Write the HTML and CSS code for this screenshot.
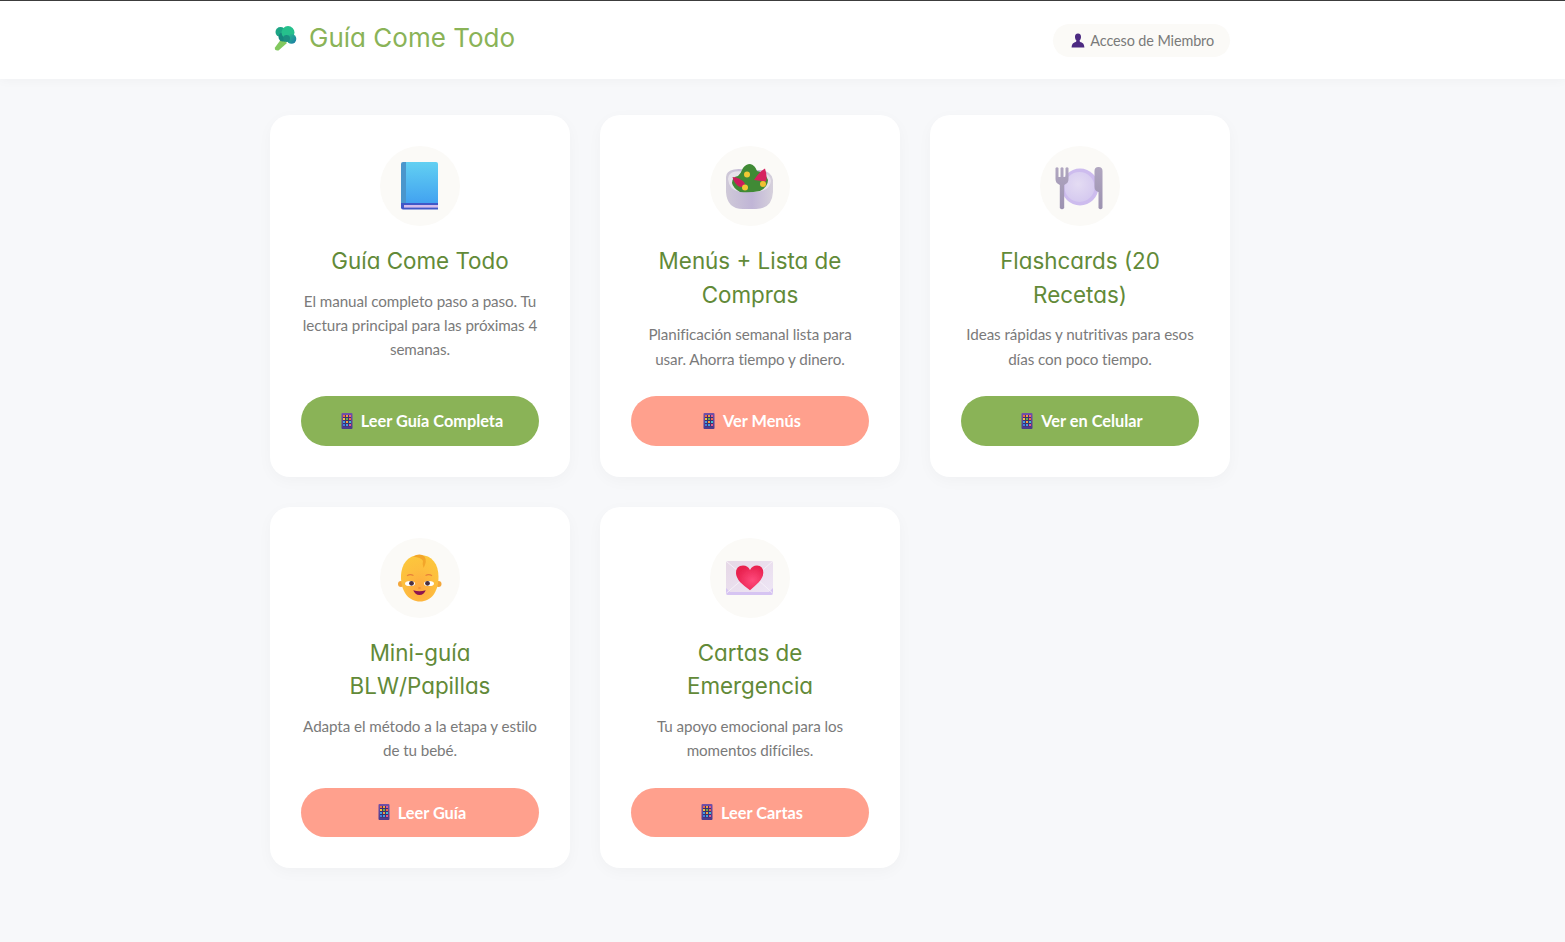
FILE: index.html
```html
<!DOCTYPE html>
<html lang="es">
<head>
<meta charset="utf-8">
<title>Guía Come Todo</title>
<link rel="stylesheet" href="styles.css">
</head>
<body>
<svg class="defs" width="0" height="0" aria-hidden="true">
  <defs>
    <linearGradient id="g-phone" x1="0" y1="0" x2="0" y2="1"><stop offset="0" stop-color="#7350a8"/><stop offset="1" stop-color="#4a3a8c"/></linearGradient>
    <symbol id="phone" viewBox="0 0 12 16">
      <rect x="0.5" y="0" width="11" height="16" rx="1" fill="url(#g-phone)"/>
      <rect x="2" y="2" width="8" height="11.500" fill="#3d2f70"/>
      <rect x="2" y="2" width="2" height="2" fill="#ef6a4a"/><rect x="5" y="2" width="2" height="2" fill="#f0a040"/><rect x="8" y="2" width="2" height="2" fill="#e85a8a"/>
      <rect x="2" y="5" width="2" height="2" fill="#f0c040"/><rect x="5" y="5" width="2" height="2" fill="#6ab04a"/><rect x="8" y="5" width="2" height="2" fill="#ef6a4a"/>
      <rect x="2" y="8" width="2" height="2" fill="#40a0e0"/><rect x="5" y="8" width="2" height="2" fill="#f0a040"/><rect x="8" y="8" width="2" height="2" fill="#40c0d0"/>
      <rect x="2" y="11" width="2" height="2" fill="#4080e0"/><rect x="5" y="11" width="2" height="2" fill="#40a0e0"/><rect x="8" y="11" width="2" height="2" fill="#e85a8a"/>
    </symbol>
    <filter id="soft" x="-10%" y="-10%" width="120%" height="120%"><feGaussianBlur stdDeviation="0.35"/></filter>
    <linearGradient id="g-book" x1="0" y1="0" x2="0" y2="1"><stop offset="0" stop-color="#62d0f2"/><stop offset="1" stop-color="#3f9ef0"/></linearGradient>
    <linearGradient id="g-bowl" x1="0" y1="0" x2="1" y2="0"><stop offset="0" stop-color="#cfc9d8"/><stop offset="0.55" stop-color="#c0b5d6"/><stop offset="1" stop-color="#d6d1dc"/></linearGradient>
    <radialGradient id="g-plate" cx="0.45" cy="0.4" r="0.65"><stop offset="0" stop-color="#e4dcf3"/><stop offset="1" stop-color="#d4c8ef"/></radialGradient>
    <linearGradient id="g-cut" x1="0" y1="0" x2="0" y2="1"><stop offset="0" stop-color="#b0a6c0"/><stop offset="1" stop-color="#9c92b0"/></linearGradient>
    <radialGradient id="g-face" cx="0.5" cy="0.72" r="0.7"><stop offset="0" stop-color="#ffa840"/><stop offset="0.6" stop-color="#fdbe3e"/><stop offset="1" stop-color="#fcc63c"/></radialGradient>
    <linearGradient id="g-env" x1="0" y1="0" x2="1" y2="1"><stop offset="0" stop-color="#e6d8e6"/><stop offset="1" stop-color="#eee6f6"/></linearGradient>
    <radialGradient id="g-heart" cx="0.6" cy="0.6" r="0.6"><stop offset="0" stop-color="#ff4a7c"/><stop offset="1" stop-color="#e8204e"/></radialGradient>
    <linearGradient id="g-broc" x1="0" y1="0" x2="1" y2="1"><stop offset="0" stop-color="#28c088"/><stop offset="1" stop-color="#1c78a8"/></linearGradient>
  </defs>
</svg>

<header class="site-header">
  <div class="header-inner">
    <div class="logo">
      <svg class="logo-icon" viewBox="0 0 24 26" aria-hidden="true">
        <path d="M1 21.500L8 12 13 17 4.500 24.500Q0 25 1 21.500Z" fill="#82c85e"/>
        <g filter="url(#soft)">
          <circle cx="6.500" cy="6" r="5" fill="#1fa585"/>
          <circle cx="9" cy="11" r="4.500" fill="#17867c"/>
          <circle cx="14" cy="6.500" r="6.500" fill="#25c08c"/>
          <circle cx="17.500" cy="13" r="4.800" fill="url(#g-broc)"/>
          <circle cx="12.500" cy="12.500" r="3.500" fill="#1a8e80"/>
        </g>
      </svg>
      <span class="logo-text">Guía Come Todo</span>
    </div>
    <a class="member-pill" href="#">
      <svg class="member-icon" viewBox="0 0 14 15" aria-hidden="true">
        <path d="M7 0.500C9.100 0.500 10.200 2.100 10 4.200 9.900 5.600 9.300 6.800 8.600 7.500 8.500 8.300 8.900 8.800 10 9.300 12 10.100 13.100 10.800 13.400 14.500H0.600C0.900 10.800 2 10.100 4 9.300 5.100 8.800 5.500 8.300 5.400 7.500 4.700 6.800 4.100 5.600 4 4.200 3.800 2.100 4.900 0.500 7 0.500Z" fill="#4c2a82"/>
      </svg>
      <span>Acceso de Miembro</span>
    </a>
  </div>
</header>

<main class="grid">
  <article class="card">
    <div class="card-icon">
      <svg viewBox="0 0 80 80" aria-hidden="true">
        <path d="M23 16H56Q58 16 58 18V61H23Z" fill="url(#g-book)"/>
        <path d="M23 16H26V59H21V18Q21 16 23 16Z" fill="#4a96cc"/>
        <path d="M21 57H58V63.500H23Q21 63.500 21 61.500Z" fill="#4058c8"/>
        <rect x="24" y="59" width="34" height="2.600" fill="#d4bcec"/>
      </svg>
    </div>
    <h2 class="card-title">Guía Come Todo</h2>
    <p class="card-text">El manual completo paso a paso. Tu lectura principal para las próximas 4 semanas.</p>
    <a class="btn btn-green" href="#"><svg class="btn-icon" aria-hidden="true"><use href="#phone"/></svg>Leer Guía Completa</a>
  </article>

  <article class="card">
    <div class="card-icon">
      <svg viewBox="0 0 80 80" aria-hidden="true">
        <path d="M16 31Q16 25 24 23.500 30 22.500 36 24H50Q62 25 63 34V46Q62 63 46 63H33Q17 63 16 46Z" fill="url(#g-bowl)"/>
        <path d="M18 33Q18 27 25 25.500 31 25 36 26H50Q60 27 61 35 60 45 46 46H30Q19 44 18 33Z" fill="#e6e2ea"/>
        <g filter="url(#soft)">
          <path d="M22 37Q22 31 28 30 31 27 33 22 36 18 40 18 45 19 47 25 56 27 58 34 58 41 50 45 40 47 30 46 23 42 22 37Z" fill="#3f8a36"/>
          <path d="M22.500 31Q30 31 35 37.500 33 43 28 40 23.500 36 22.500 31Z" fill="#cc1f5c"/>
          <path d="M55 22.500Q57.500 30 56 35.500L44 34Q49 26 55 22.500Z" fill="#d6225f"/>
          <circle cx="37" cy="28.500" r="3" fill="#f2c834"/>
          <circle cx="35" cy="41.500" r="3" fill="#f2c834"/>
          <circle cx="53" cy="38" r="3" fill="#f0c030"/>
        </g>
      </svg>
    </div>
    <h2 class="card-title">Menús + Lista de Compras</h2>
    <p class="card-text">Planificación semanal lista para usar. Ahorra tiempo y dinero.</p>
    <a class="btn btn-coral" href="#"><svg class="btn-icon" aria-hidden="true"><use href="#phone"/></svg>Ver Menús</a>
  </article>

  <article class="card">
    <div class="card-icon">
      <svg viewBox="0 0 80 80" aria-hidden="true">
        <circle cx="40" cy="41" r="18.500" fill="#cdbcee"/>
        <circle cx="39.500" cy="41" r="15" fill="url(#g-plate)"/>
        <path d="M15.500 22V33Q15.500 37 19 38.500L19.800 39V62Q22 64.500 24.200 62V39L25 38.500Q28.500 37 28.500 33V22Q27 20.500 25.500 22V31H23.500V22Q22 20.500 20.500 22V31H18.500V22Q17 20.500 15.500 22Z" fill="url(#g-cut)"/>
        <path d="M54.500 25Q54.500 21 58.500 21 62.500 21 62.500 25V62Q60.500 64.500 58.500 62V46Q54.500 45 54.500 41Z" fill="url(#g-cut)"/>
      </svg>
    </div>
    <h2 class="card-title">Flashcards (20 Recetas)</h2>
    <p class="card-text">Ideas rápidas y nutritivas para esos días con poco tiempo.</p>
    <a class="btn btn-green" href="#"><svg class="btn-icon" aria-hidden="true"><use href="#phone"/></svg>Ver en Celular</a>
  </article>

  <article class="card">
    <div class="card-icon">
      <svg viewBox="0 0 80 80" aria-hidden="true">
        <circle cx="21" cy="46" r="3" fill="#f3a63a"/>
        <circle cx="58.500" cy="46" r="3" fill="#f3a63a"/>
        <path d="M40 17C52 17 58.500 26 58.500 39 58.500 54 51 63.500 40 63.500 29 63.500 21 54 21 39 21 26 28 17 40 17Z" fill="url(#g-face)"/>
        <path d="M33 18.500Q40 14.500 44.500 18.500 47.500 23 43.500 30 42 26 43 23 42 19.500 33 18.500Z" fill="#f3a62a"/>
        <path d="M27 37.800Q30 35.800 33.500 37.500" stroke="#e8803a" stroke-width="1.200" fill="none"/>
        <path d="M45.500 37.500Q49 35.800 52 37.800" stroke="#e8803a" stroke-width="1.200" fill="none"/>
        <ellipse cx="30" cy="45.500" rx="5" ry="2.600" fill="#fff"/>
        <ellipse cx="49" cy="45.500" rx="5" ry="2.600" fill="#fff"/>
        <circle cx="31.500" cy="45.300" r="2.400" fill="#4a3040"/>
        <circle cx="47.500" cy="45.300" r="2.400" fill="#4a3040"/>
        <path d="M33.300 52.300Q39.500 54 45.700 52.300 44 57 39.500 57 35 57 33.300 52.300Z" fill="#8c1450"/>
        <ellipse cx="39.500" cy="50" rx="1.500" ry="0.800" fill="#f09030"/>
      </svg>
    </div>
    <h2 class="card-title">Mini-guía BLW/Papillas</h2>
    <p class="card-text">Adapta el método a la etapa y estilo de tu bebé.</p>
    <a class="btn btn-coral" href="#"><svg class="btn-icon" aria-hidden="true"><use href="#phone"/></svg>Leer Guía</a>
  </article>

  <article class="card">
    <div class="card-icon">
      <svg viewBox="0 0 80 80" aria-hidden="true">
        <rect x="16" y="23" width="47" height="34" rx="2" fill="url(#g-env)"/>
        <path d="M16 50L20 54H59L63 50V55Q63 57 61 57H18Q16 57 16 55Z" fill="#d6c4f2"/>
        <path d="M16.500 23.500L40 43 62.500 23.500" fill="none" stroke="#f6f0f8" stroke-width="1"/>
        <path d="M16.500 55L34 40M62.500 55L46 40" fill="none" stroke="#f6f0f8" stroke-width="1"/>
        <path d="M40 52.300Q34 48 30 44 26 39 26 35 26 27.500 33 27.500 38 27.500 40 32 42 27.500 47 27.500 53.300 27.500 53.300 35 53.300 39 49 44 45 48 40 52.300Z" fill="url(#g-heart)" filter="url(#soft)"/>
      </svg>
    </div>
    <h2 class="card-title">Cartas de Emergencia</h2>
    <p class="card-text">Tu apoyo emocional para los momentos difíciles.</p>
    <a class="btn btn-coral" href="#"><svg class="btn-icon" aria-hidden="true"><use href="#phone"/></svg>Leer Cartas</a>
  </article>
</main>
</body>
</html>
```

FILE: styles.css
```css
* { box-sizing: border-box; }

html, body { margin: 0; padding: 0; }

body {
  min-height: 942px;
  background: #f7f8fa;
  font-family: "Lato", "Liberation Sans", sans-serif;
  color: #7a7a7a;
}

.defs { display: block; height: 0; }

.site-header {
  height: 79px;
  background: #fff;
  border-top: 1px solid #3c3c3c;
  box-shadow: 0 2px 10px rgba(0, 0, 0, 0.03);
}

.header-inner {
  width: 960px;
  margin-left: 270px;
  display: flex;
  align-items: flex-start;
  justify-content: space-between;
}

.logo {
  display: flex;
  align-items: center;
  gap: 11px;
  padding: 22px 0 0 4px;
}

.logo-icon { width: 24px; height: 26px; margin-top: 2px; }

.logo-text {
  font-family: "Inter", sans-serif;
  font-feature-settings: "cv11" 1;
  font-size: 26px;
  line-height: 30px;
  color: #8ab357;
}

.member-pill {
  display: flex;
  align-items: center;
  gap: 5px;
  height: 33px;
  margin-top: 23px;
  padding: 0 16px 0 18px;
  border-radius: 17px;
  background: #fbfaf7;
  color: #7a7a7a;
  font-size: 14.4px;
  letter-spacing: -0.1px;
  text-decoration: none;
}

.member-icon { width: 14px; height: 15px; }

.grid {
  width: 960px;
  margin: 36px 0 0 270px;
  display: grid;
  grid-template-columns: repeat(3, 300px);
  gap: 30px;
}

.card {
  display: flex;
  flex-direction: column;
  align-items: center;
  padding: 31px;
  border-radius: 20px;
  background: #fff;
  box-shadow: 0 4px 15px rgba(0, 0, 0, 0.03);
  text-align: center;
}

.card-icon {
  width: 80px;
  height: 80px;
  border-radius: 50%;
  background: #fbfaf7;
  margin-bottom: 18px;
}

.card-icon svg { display: block; width: 80px; height: 80px; }

.card-title {
  margin: 0 0 11px;
  padding: 0 6px;
  font-family: "Inter", sans-serif;
  font-feature-settings: "cv11" 1;
  font-size: 22.4px;
  line-height: 33.6px;
  font-weight: 400;
  color: #628a38;
}

.card-text {
  margin: 0 0 25.2px;
  padding: 0 1px;
  font-size: 15.2px;
  line-height: 24.32px;
  letter-spacing: -0.08px;
  color: #7a7a7a;
}

.btn {
  display: flex;
  align-items: center;
  justify-content: center;
  gap: 8px;
  width: 100%;
  height: 49.6px;
  margin-top: auto;
  padding-left: 4px;
  border-radius: 25px;
  color: #fff;
  font-size: 16.32px;
  font-weight: 700;
  text-decoration: none;
}

.btn-green { background: #8ab357; }
.btn-coral { background: #ffa08d; }

.btn-icon { width: 12px; height: 16px; }
```
